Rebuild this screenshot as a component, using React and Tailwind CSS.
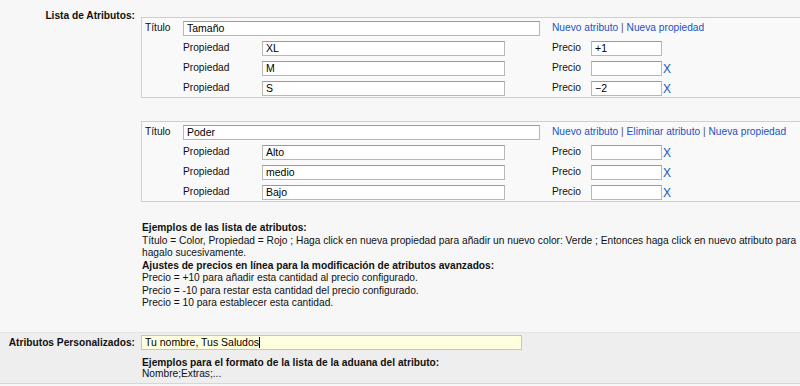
import React from 'react';

const font = { fontFamily: '"Liberation Sans", Arial, sans-serif' };

function Field({ value = '', className = '' }) {
    return (
        <div className={`h-[15px] border border-[#b8b8b8] border-t-[#9a9a9a] bg-white px-[3px] text-[10.5px] leading-[13px] text-black shrink-0 ${className}`}>
            {value}
        </div>
    );
}

function Remove() {
    return <span className="ml-[1px] text-[12px] leading-none text-[#2253c4]">X</span>;
}

function AttrBox({ title, links, rows }) {
    return (
        <div className="w-[700px] border border-[#cfcfcf] bg-[#f9f9f9] pt-[3px] pb-[1px] pl-[2px] flex flex-col gap-[5px]">
            <div className="h-[15px] flex items-center">
                <span className="w-[39px] pl-[1px]">Título</span>
                <Field value={title} className="w-[357px]" />
                <span className="ml-[12px] text-[#2253c4] whitespace-nowrap">
                    {links.map((l, i) => (
                        <span key={l}>
                            {i > 0 && <span className="text-[#555]"> | </span>}
                            {l}
                        </span>
                    ))}
                </span>
            </div>
            {rows.map((r, i) => (
                <div key={i} className="h-[15px] flex items-center">
                    <span className="w-[39px]"></span>
                    <span className="w-[79px]">Propiedad</span>
                    <Field value={r.prop} className="w-[243px]" />
                    <span className="ml-[47px] w-[39px]">Precio</span>
                    <Field value={r.price} className="w-[71px]" />
                    {r.x && <Remove />}
                </div>
            ))}
        </div>
    );
}

export default function App() {
    return (
        <div style={font} className="w-[800px] h-[386px] overflow-hidden bg-[#f7f7f7] text-[10.2px] leading-[12.5px] text-[#111]">
            <div className="flex pt-[10px]">
                <div className="w-[135px] shrink-0 text-right font-bold whitespace-nowrap">Lista de Atributos:</div>
                <div className="ml-[6px] pt-[7px] flex flex-col">
                    <AttrBox
                        title="Tamaño"
                        links={['Nuevo atributo', 'Nueva propiedad']}
                        rows={[
                            { prop: 'XL', price: '+1', x: false },
                            { prop: 'M', price: '', x: true },
                            { prop: 'S', price: '−2', x: true },
                        ]}
                    />
                    <div className="mt-[23px]">
                        <AttrBox
                            title="Poder"
                            links={['Nuevo atributo', 'Eliminar atributo', 'Nueva propiedad']}
                            rows={[
                                { prop: 'Alto', price: '', x: true },
                                { prop: 'medio', price: '', x: true },
                                { prop: 'Bajo', price: '', x: true },
                            ]}
                        />
                    </div>
                    <div className="mt-[20px] pl-[1px] whitespace-nowrap">
                        <div className="font-bold">Ejemplos de las lista de atributos:</div>
                        <div>Título = Color, Propiedad = Rojo ; Haga click en nueva propiedad para añadir un nuevo color: Verde ; Entonces haga click en nuevo atributo para</div>
                        <div>hagalo sucesivamente.</div>
                        <div className="font-bold">Ajustes de precios en línea para la modificación de atributos avanzados:</div>
                        <div>Precio = +10 para añadir esta cantidad al precio configurado.</div>
                        <div>Precio = -10 para restar esta cantidad del precio configurado.</div>
                        <div>Precio = 10 para establecer esta cantidad.</div>
                    </div>
                </div>
            </div>

            <div className="mt-[22px] bg-[#eeeeee] border-t border-[#e4e4e4] border-b border-b-[#d6d6d6] flex pt-[2px] pb-[3px]">
                <div className="w-[135px] shrink-0 text-right font-bold whitespace-nowrap pt-[2px]">Atributos Personalizados:</div>
                <div className="ml-[6px] flex flex-col">
                    <div className="h-[15px] w-[381px] border border-[#c8c8b0] bg-[#ffffdf] px-[3px] text-[10.5px] leading-[13px] text-black">
                        Tu nombre, Tus Saludos<span className="inline-block w-px h-[11px] bg-black align-middle"></span>
                    </div>
                    <div className="mt-[7px] pl-[1px] font-bold leading-[11.5px]">Ejemplos para el formato de la lista de la aduana del atributo:</div>
                    <div className="pl-[1px] leading-[11.5px]">Nombre;Extras;...</div>
                </div>
            </div>
        </div>
    );
}
